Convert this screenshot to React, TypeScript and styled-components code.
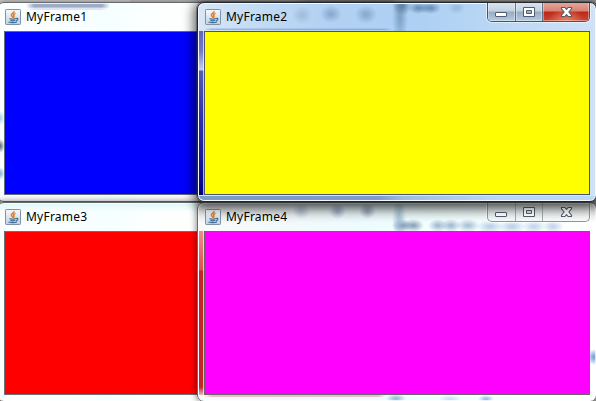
import React from "react";
import styled, { createGlobalStyle, css } from "styled-components";

const GlobalStyle = createGlobalStyle`
  body { margin: 0; overflow: hidden; }
  *, *::before, *::after { box-sizing: border-box; }
`;

type Look = "plain" | "plainLower" | "blue" | "ice";

/* A soft dark spot showing through the translucent frame. */
const spot = (x: number, y: number, w: number, h: number, color: string) =>
  `radial-gradient(closest-side, ${color} 15%, transparent) ${x}px ${y}px / ${w}px ${h}px no-repeat`;

/* A soft horizontal streak, faded at both ends. */
const streak = (x: number, y: number, w: number, h: number, color: string) =>
  `linear-gradient(90deg, transparent, ${color} 8px calc(100% - 8px), transparent) ${x}px ${y}px / ${w}px ${h}px no-repeat`;

const glass: Record<Look, string> = {
  plain: [
    streak(28, 0, 84, 1, "#b9c5da"),
    streak(28, 1, 84, 3, "#9dacc6"),
    streak(28, 4, 84, 1, "#b9c5da"),
    streak(29, 5, 82, 2, "#dee5f1"),
    spot(-3, 108, 10, 14, "#a9d6e6"),
    spot(-3, 136, 10, 14, "#667784"),
    spot(-3, 164, 10, 13, "#8cbbd9"),
    "linear-gradient(90deg, #fafeff 0 60px, #f5ffff 110px, #fdffff 160px, #fff)",
  ].join(","),
  plainLower: [
    "linear-gradient(#dff6f8, transparent 9px)",
    "linear-gradient(90deg, #fafeff 0 60px, #f5ffff 110px, #fdffff 160px, #fff)",
  ].join(","),
  blue: [
    spot(94, 3, 20, 18, "#788da750"),
    spot(122, 2, 22, 18, "#557da970"),
    spot(157, 2, 22, 19, "#557da970"),
    spot(194, -6, 20, 18, "#4f7192b0"),
    spot(194, -14, 16, 56, "#6087ac90"),
    spot(210, -1, 21, 12, "#486f98a0"),
    spot(222, -1, 21, 12, "#486f98a0"),
    spot(250, -1, 17, 12, "#81a5c780"),
    streak(6, 26, 188, 1, "#7699d8a0"),
    streak(6, 25, 188, 1, "#8bafe070"),
    "linear-gradient(90deg, #d9e6f5 0, #c3dbf4 60px, #b4d2f2 120px, #add0f3 220px, #bad7f4 300px, #cfe2f6 100%)",
  ].join(","),
  ice: [
    "linear-gradient(#00000040, #00000028 6px, #00000010 13px, transparent 20px)",
    spot(94, 0, 18, 16, "#8296bd60"),
    spot(131, 0, 17, 16, "#8296bd90"),
    spot(161, 0, 17, 16, "#778cb290"),
    spot(194, -8, 14, 46, "#9bbbd8b0"),
    spot(194, 16, 20, 13, "#587599b0"),
    spot(205, 16, 21, 13, "#587599a0"),
    spot(230, 16, 20, 13, "#7897bca0"),
    spot(243, 16, 20, 13, "#7897bca0"),
    spot(258, 16, 24, 13, "#7897bc90"),
    spot(278, 17, 28, 13, "#9eb8dda0"),
    spot(300, 17, 28, 13, "#9eb8dda0"),
    spot(324, 17, 24, 13, "#9eb8dd90"),
    spot(344, 17, 22, 13, "#9eb8dd90"),
    spot(389, 146, 14, 16, "#7ea5de"),
    streak(6, 192, 182, 2, "#eeb9cb"),
    spot(188, 191, 20, 9, "#82a9c2c0"),
    spot(240, 192, 24, 8, "#b8cef0a0"),
    spot(280, 192, 16, 8, "#a6bee7"),
    "linear-gradient(90deg, #fafafa 0, #f3f9fb 80px, #edfbff 160px, #f2ffff 220px, #f8ffff 300px, #fff 100%)",
  ].join(","),
};

const Desktop = styled.main`
  position: relative;
  width: 596px;
  height: 401px;
  overflow: hidden;
  background: linear-gradient(90deg, #d9d8d5 0 130px, #c9c8c5 130px 290px, #aaa8a3 310px);
  font-family: "Noto Sans", "Open Sans", sans-serif;
`;

const Frame = styled.section<{ $x: number; $y: number; $look: Look; $active?: boolean }>`
  position: absolute;
  left: ${(p) => p.$x}px;
  top: ${(p) => p.$y}px;
  width: 400px;
  height: 200px;
  display: grid;
  grid-template: 28px 1fr 6px / 6px 1fr 6px;
  overflow: hidden;
  border: 1px solid ${(p) => (p.$active ? "#24282e" : "#686b6d")};
  border-radius: 7px;
  background: ${(p) => glass[p.$look]};
  box-shadow:
    inset 0 0 0 1px ${(p) => (p.$active ? "#f2faff" : "#ffffffb0")},
    ${(p) => (p.$active ? "0 0 0 1px #30343966, 0 2px 12px 3px #000000a8" : "0 0 6px 1px #00000070")};
`;

const TitleBar = styled.header`
  grid-area: 1 / 2 / 2 / 3;
  display: flex;
  justify-content: space-between;
`;

const TitleGroup = styled.div`
  display: flex;
  align-items: center;
  gap: 5px;
  padding-left: 1px;
`;

const Title = styled.h1`
  margin: 0;
  color: #000;
  font-size: 12px;
  line-height: 16px;
  font-weight: 400;
  letter-spacing: 0.22px;
  white-space: nowrap;
`;

const Client = styled.div<{ $color: string; $edge: string }>`
  grid-area: 2 / 2 / 3 / 3;
  background: ${(p) => p.$color};
  border: 1px solid ${(p) => p.$edge};
`;

const SideGlass = styled.div<{ $active?: boolean }>`
  grid-area: 2 / 1 / 3 / 2;
  margin-left: 1px;
  border-right: 1px solid #ffffffb0;
  ${(p) =>
    p.$active
      ? css`background: linear-gradient(#6363bd, #7777ca 20px, #cbcbed 39px, #5a5ab5 40px, #3535a8 82px, #0c0c94 150px, #000080);`
      : css`background: linear-gradient(#ef8e8e, #df5050 39px, #c8242b 40px, #c8242b 156px, #f0b5bd);`}
`;

const BottomGlass = styled.div`
  grid-area: 3 / 1 / 4 / 4;
  margin: 0 1px 1px;
  border-top: 1px solid #d6e5f7;
  border-radius: 0 0 5px 5px;
  background: linear-gradient(90deg, #7c9bc6, #7f9cce 180px, #9ebedf 205px, #b9d8fa 300px);
`;

const Controls = styled.div<{ $active?: boolean }>`
  display: flex;
  width: 103px;
  height: 20px;
  margin-top: -1px;
  border: 1px solid ${(p) => (p.$active ? "#465365" : "#8e9496")};
  border-top: 0;
  border-radius: 0 0 5px 5px;
  box-shadow: 0 0 0 1px #ffffff90;
  overflow: hidden;
`;

const buttonFill = {
  idle: "transparent",
  normal: "linear-gradient(#dce6f2 0, #c3d0df 9px, #98acc3 10px, #b3cce5 100%)",
  close:
    "radial-gradient(ellipse at 50% 105%, #e98362 0, transparent 55%), linear-gradient(#e6a99e 0, #d98273 9px, #b9281b 10px, #c94736 100%)",
};

const ControlButton = styled.button<{ $width: number; $fill: keyof typeof buttonFill }>`
  display: flex;
  flex: none;
  width: ${(p) => p.$width}px;
  align-items: center;
  justify-content: center;
  padding: 2px 0 0;
  border: 0;
  border-right: 1px solid ${(p) => (p.$fill === "idle" ? "#a4a9aa" : "#66717f")};
  background: ${(p) => buttonFill[p.$fill]};
  box-shadow: ${(p) => (p.$fill === "idle" ? "none" : "inset 0 0 0 1px #ffffff60")};

  &:last-child { border-right: 0; }
`;

const JavaIcon = () => (
  <svg width="16" height="16" viewBox="0 0 16 16" aria-hidden="true">
    <defs>
      <linearGradient id="tile" x2="0" y2="1">
        <stop stopColor="#f8fafb" />
        <stop offset="1" stopColor="#c2d0df" />
      </linearGradient>
    </defs>
    <rect x=".5" y=".5" width="15" height="15" rx=".7" fill="url(#tile)" stroke="#7e93a8" />
    <path d="M9 2C10 4 6 4.2 6.4 6.2C6.7 7.3 8 7.6 7.8 8.8M10.5 4.3C8.5 5 8 6 9 7C9.4 7.7 9 8.2 8.5 8.7" fill="none" stroke="#e87817" strokeWidth="1.4" />
    <path d="M4.5 9.5Q7.5 10.6 11 9.5M5.3 11.4Q7.6 12.2 10 11.4M11 9.5Q13.8 9 12.5 10.8Q12 11.5 10.7 11.8M3.5 13Q8 14.4 12 13" fill="none" stroke="#3f6c92" strokeWidth="1.2" />
  </svg>
);

const MinimizeIcon = () => (
  <svg width="13" height="13" viewBox="0 0 13 13" aria-hidden="true">
    <rect x=".5" y="6.5" width="11" height="4" rx=".5" fill="#fff" stroke="#555b6c" />
  </svg>
);

const MaximizeIcon = () => (
  <svg width="13" height="13" viewBox="0 0 13 13" aria-hidden="true">
    <path d="M.5 1.5h11v9H.5zM3.5 4.5v3h5v-3z" fill="#fff" fillRule="evenodd" stroke="#555b6c" />
  </svg>
);

const CloseIcon = () => (
  <svg width="13" height="13" viewBox="0 0 13 13" aria-hidden="true">
    <path d="M1.5 1.5h3.3L6.5 3.4 8.2 1.5h3.3v1.3L8.9 6l2.6 3.2v1.3H8.2L6.5 8.6l-1.7 1.9H1.5V9.2L4.1 6 1.5 2.8z" fill="#fff" stroke="#555b6c" strokeWidth="1.1" />
  </svg>
);

const WindowControls = ({ active }: { active?: boolean }) => (
  <Controls $active={active}>
    <ControlButton $width={28} $fill={active ? "normal" : "idle"} aria-label="Minimize">
      <MinimizeIcon />
    </ControlButton>
    <ControlButton $width={27} $fill={active ? "normal" : "idle"} aria-label="Maximize">
      <MaximizeIcon />
    </ControlButton>
    <ControlButton $width={46} $fill={active ? "close" : "idle"} aria-label="Close">
      <CloseIcon />
    </ControlButton>
  </Controls>
);

interface WindowProps {
  title: string;
  x: number;
  y: number;
  look: Look;
  color: string;
  edge: string;
  active?: boolean;
  front?: boolean;
}

const AppWindow = ({ title, x, y, look, color, edge, active, front }: WindowProps) => (
  <Frame $x={x} $y={y} $look={look} $active={active}>
    <TitleBar>
      <TitleGroup>
        <JavaIcon />
        <Title>{title}</Title>
      </TitleGroup>
      {front && <WindowControls active={active} />}
    </TitleBar>
    {front && <SideGlass $active={active} />}
    <Client $color={color} $edge={edge} />
    {active && <BottomGlass />}
  </Frame>
);

const windows: WindowProps[] = [
  { title: "MyFrame1", x: -3, y: 2, look: "plain", color: "#0000ff", edge: "#666b7b" },
  { title: "MyFrame3", x: -3, y: 202, look: "plainLower", color: "#ff0000", edge: "#667574" },
  { title: "MyFrame4", x: 197, y: 202, look: "ice", color: "#ff00ff", edge: "#66666b", front: true },
  { title: "MyFrame2", x: 197, y: 2, look: "blue", color: "#ffff00", edge: "#495471", front: true, active: true },
];

export default function App() {
  return (
    <>
      <GlobalStyle />
      <Desktop>
        {windows.map((w) => (
          <AppWindow key={w.title} {...w} />
        ))}
      </Desktop>
    </>
  );
}
